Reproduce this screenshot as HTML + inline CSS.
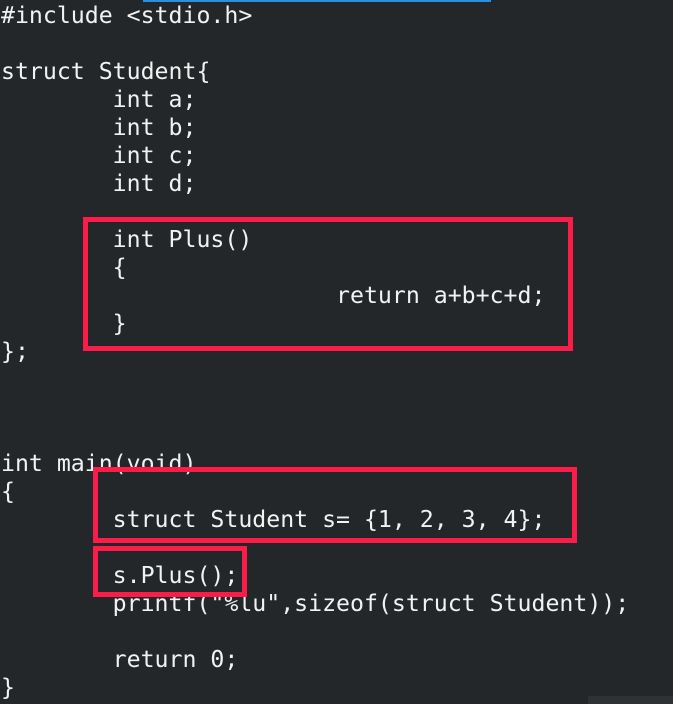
<!DOCTYPE html>
<html><head><style>
html,body{margin:0;padding:0;background:#232729;width:673px;height:704px;overflow:hidden;position:relative}
pre{margin:0;position:absolute;left:1px;top:2px;font-family:"DejaVu Sans Mono","Liberation Mono",monospace;font-size:23.2px;line-height:28px;color:#f2f2f2}
.b{position:absolute;border:5px solid #fc1c4a;box-sizing:border-box}
</style></head><body>
<div style="position:absolute;left:143px;top:0;width:348px;height:2px;background:#2a8fe0"></div>
<pre>#include &lt;stdio.h&gt;

struct Student{
        int a;
        int b;
        int c;
        int d;

        int Plus()
        {
                        return a+b+c+d;
        }
};



int main(void)
{
        struct Student s= {1, 2, 3, 4};

        s.Plus();
        printf("%lu",sizeof(struct Student));

        return 0;
}</pre>
<div class="b" style="left:83px;top:217px;width:490px;height:134px"></div>
<div class="b" style="left:93px;top:467px;width:484px;height:76px"></div>
<div class="b" style="left:93px;top:546px;width:154px;height:51px"></div>
<div style="position:absolute;left:588px;top:696px;width:85px;height:8px;background:#2e3235"></div>
</body></html>
